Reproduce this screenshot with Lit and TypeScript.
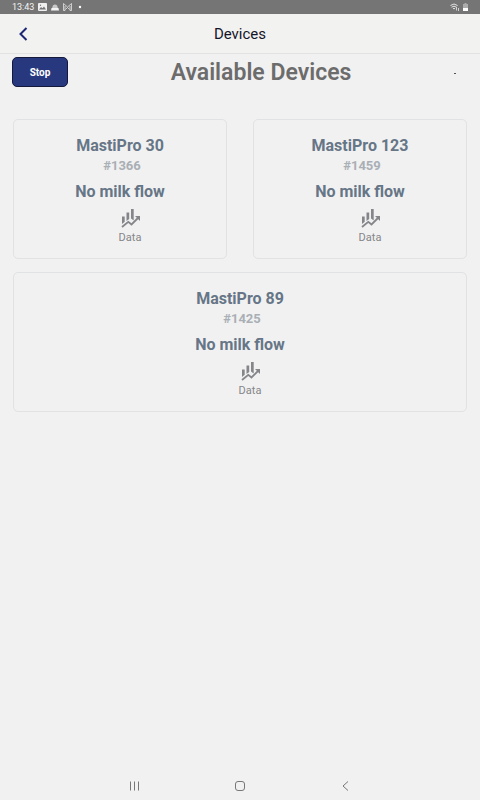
import { LitElement, html, css, svg } from "lit";
import { customElement, property } from "lit/decorators.js";

interface Device {
  name: string;
  serial: string;
  status: string;
}

const devices: Device[] = [
  { name: "MastiPro 30", serial: "#1366", status: "No milk flow" },
  { name: "MastiPro 123", serial: "#1459", status: "No milk flow" },
  { name: "MastiPro 89", serial: "#1425", status: "No milk flow" },
];

@customElement("status-bar")
class StatusBar extends LitElement {
  static styles = css`
    :host {
      display: flex;
      align-items: center;
      justify-content: space-between;
      box-sizing: border-box;
      height: 14px;
      padding: 0 12px;
      background: #757575;
      color: #f4f4f4;
      font-size: 9px;
      line-height: 14px;
    }
    .group {
      display: flex;
      align-items: center;
      gap: 4px;
    }
    svg {
      display: block;
    }
  `;

  render() {
    return html`
      <div class="group">
        <span>13:43</span>
        <svg width="9" height="8" viewBox="0 0 9 8">
          <rect width="9" height="8" rx="1" fill="#f0f0f0" />
          <path d="M1 6.5 3 4 4.500 5.200 6 3.500 8 6.500Z" fill="#757575" />
          <circle cx="2.5" cy="2.3" r=".7" fill="#757575" />
        </svg>
        <svg width="8" height="8" viewBox="0 0 8 8">
          <path d="M1.500 4a2.500 2.500 0 0 1 5 0l.5 1H1Z" fill="#c8c8c8" />
          <path d="M.5 5h7l.5 2.500H0Z" fill="#f4f4f4" />
        </svg>
        <svg width="9" height="8" viewBox="0 0 9 8" fill="none" stroke="#e4e4e4">
          <path d="M.5 7.500v-7L4.500 4l4-3.500v7M.5 7.500h1.500V3M8.500 7.500H7V3M2.500 6.500l2-2 2 2" stroke-width=".8" />
        </svg>
        <svg width="8" height="8" viewBox="0 0 8 8">
          <circle cx="4" cy="4" r="1.200" fill="#fff" />
        </svg>
      </div>
      <div class="group">
        <svg width="9" height="8" viewBox="0 0 9 8" fill="none" stroke="#e4e4e4">
          <path d="M.5 2.500q3.500-3 7 0M1.500 4.200q2.500-2 5 0M3 5.800q1-.8 2 0" />
          <path d="M6.500 4v3.500M8.500 5v3" stroke-width=".8" />
        </svg>
        <svg width="5" height="8" viewBox="0 0 5 8">
          <path d="M1.500 0h2v1H5v4H0V1h1.500Z" fill="#acacac" />
          <path d="M0 5h5v3H0Z" fill="#fff" />
        </svg>
      </div>
    `;
  }
}

@customElement("device-card")
class DeviceCard extends LitElement {
  @property({ attribute: false }) device!: Device;

  static styles = css`
    :host {
      display: flex;
      flex-direction: column;
      align-items: center;
      box-sizing: border-box;
      padding: 16px 12px 12px;
      border: 1px solid #e0e2e3;
      border-radius: 5px;
      color: #667687;
      text-align: center;
    }
    h2,
    p {
      margin: 0;
      font-size: 16px;
      line-height: 20px;
      font-weight: 700;
    }
    .serial {
      padding-left: 4px;
      color: #a9afb5;
      font-size: 13px;
    }
    .status {
      margin-top: 6px;
    }
    .data {
      display: flex;
      flex-direction: column;
      align-items: center;
      margin: 6px 0 0 20px;
      padding: 0;
      border: 0;
      background: none;
      color: #85868a;
      font: inherit;
      font-size: 11px;
      line-height: 16px;
    }
    svg {
      display: block;
      margin-bottom: 2px;
    }
  `;

  render() {
    return html`
      <h2>${this.device.name}</h2>
      <p class="serial">${this.device.serial}</p>
      <p class="status">${this.device.status}</p>
      <button class="data">
        <svg width="20" height="20" viewBox="0 0 20 20">
          <g fill="currentColor">
            <path d="M2 8.500h2.700v5.200L2 16ZM6.500 4.500h2.700v6.500L6.500 13ZM11 1h2.700v11.500L11 10.500Z" />
            <path d="M15 8h5v5Z" />
          </g>
          <path
            d="m2 19 6.300-5.200 3.200 2.700L18 10"
            fill="none"
            stroke="currentColor"
            stroke-width="1.800"
          />
        </svg>
        Data
      </button>
    `;
  }
}

@customElement("app-root")
class AppRoot extends LitElement {
  static styles = css`
    :host {
      display: flex;
      flex-direction: column;
      min-height: 100vh;
      background: #f1f1f1;
      font-family: Roboto, "Liberation Sans", sans-serif;
    }
    svg {
      display: block;
    }
    header {
      display: grid;
      grid-template-columns: 1fr auto 1fr;
      align-items: center;
      height: 39px;
      padding: 0 16px;
      background: #f2f2f1;
      border-bottom: 1px solid #e2e2e2;
    }
    header h1 {
      margin: 0;
      color: #15152a;
      font-size: 15px;
      line-height: 20px;
      font-weight: 400;
    }
    button {
      font-family: inherit;
    }
    .back,
    nav button {
      padding: 0;
      border: 0;
      background: none;
    }
    .back {
      justify-self: start;
    }
    .toolbar {
      display: flex;
      align-items: flex-start;
      padding: 3px 24px 0 12px;
    }
    .stop {
      width: 56px;
      height: 30px;
      padding: 0;
      border: 1px solid #14193c;
      border-radius: 5px;
      background: #28387f;
      color: #fff;
      font-size: 10px;
      font-weight: 700;
    }
    .toolbar h2 {
      flex: 1;
      margin: 0;
      color: #6c6c6c;
      font-size: 23px;
      line-height: 32px;
      font-weight: 600;
      text-align: center;
    }
    .dot {
      align-self: center;
      width: 2px;
      height: 1px;
      background: #555;
    }
    main {
      display: flex;
      flex-wrap: wrap;
      gap: 13px 26px;
      padding: 30px 13px;
    }
    device-card {
      flex: 1 0 40%;
    }
    nav {
      display: grid;
      grid-template-columns: repeat(3, 1fr);
      margin-top: auto;
      padding: 8px 17%;
      color: #777;
    }
    nav button {
      display: flex;
      justify-content: center;
      color: inherit;
    }
  `;

  render() {
    return html`
      <status-bar></status-bar>
      <header>
        <button class="back" aria-label="Back">
          <svg width="14" height="14" viewBox="0 0 14 14">
            <path d="m10.500 1-6 6 6 6" fill="none" stroke="#1d2673" stroke-width="2" />
          </svg>
        </button>
        <h1>Devices</h1>
      </header>
      <div class="toolbar">
        <button class="stop">Stop</button>
        <h2>Available Devices</h2>
        <span class="dot"></span>
      </div>
      <main>
        ${devices.map((d) => html`<device-card .device=${d}></device-card>`)}
      </main>
      <nav>
        ${this.navButton("Recent apps", svg`<path d="M2.500 1.500v9M6.500 1.500v9M10.500 1.500v9" />`)}
        ${this.navButton("Home", svg`<rect x="1.500" y="1.500" width="9" height="9" rx="2.500" />`)}
        ${this.navButton("Back", svg`<path d="M8 1.500 3 6l5 4.500" />`)}
      </nav>
    `;
  }

  private navButton(label: string, shape: unknown) {
    return html`
      <button aria-label=${label}>
        <svg width="12" height="12" viewBox="0 0 12 12" fill="none" stroke="currentColor">
          ${shape}
        </svg>
      </button>
    `;
  }
}
